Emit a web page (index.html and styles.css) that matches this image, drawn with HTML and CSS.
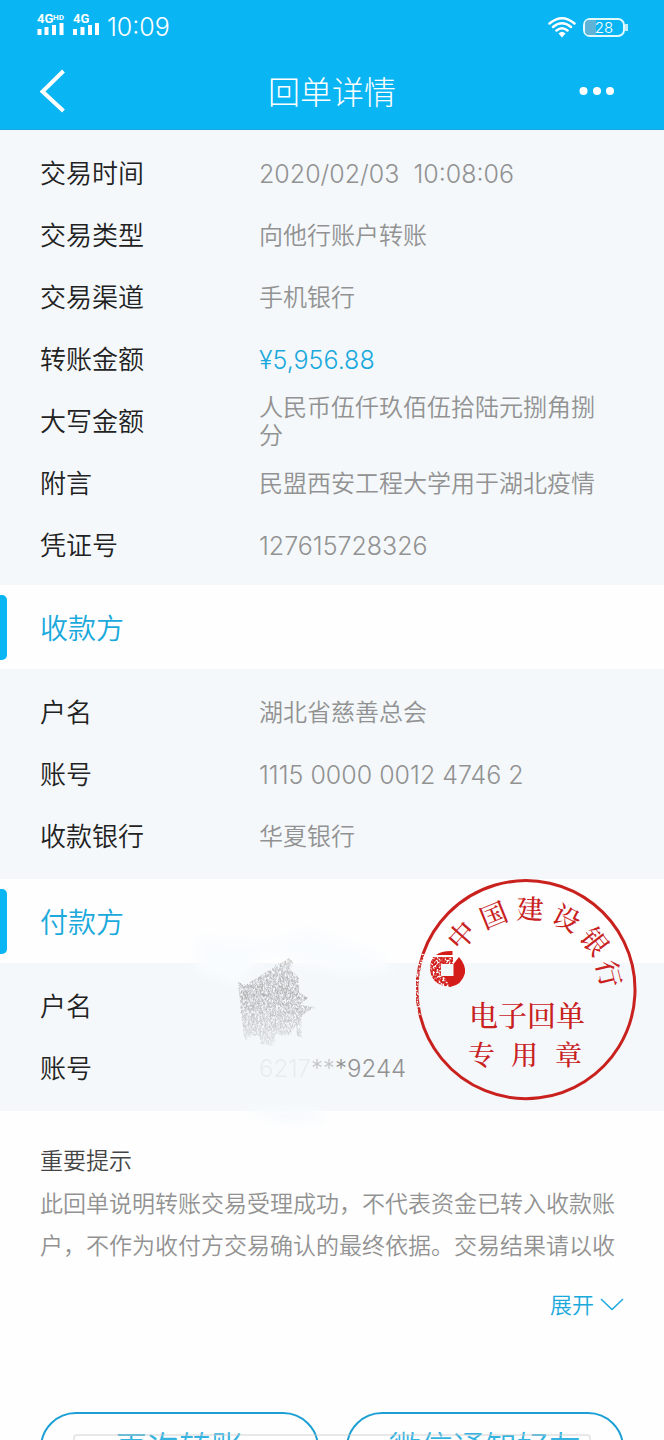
FILE: index.html
```html
<!DOCTYPE html>
<html lang="zh-CN">
<head>
    <meta charset="UTF-8">
    <meta name="viewport" content="width=device-width, initial-scale=1.0">
    <title>回单详情</title>
    <link rel="stylesheet" href="styles.css">
</head>
<body>
    <div class="app">
        <header class="header">
            <div class="status-bar">
                <svg class="signal" viewBox="0 0 64 28">
                    <g class="signal-text">
                        <text x="0" y="10" font-size="13">4G</text>
                        <text x="16" y="7" font-size="8">HD</text>
                        <text x="36" y="10" font-size="13">4G</text>
                    </g>
                    <g class="signal-bars">
                        <path d="M2.5 16v6M9.500 14v8M17 12v10M24.500 10v12"/>
                        <path d="M38 16v6M45.500 14v8M53 12v10M60 10v12"/>
                    </g>
                </svg>
                <span class="clock">10:09</span>
                <svg class="wifi" viewBox="0 0 28 22">
                    <path d="M1.500 7.500Q14-3 26.500 7.500M5 11Q14 3.500 23 11M8.500 14.500Q14 10 19.500 14.500"/>
                    <path class="wifi-dot" d="M10.500 17.500Q14 14 17.500 17.500L14 21.500z"/>
                </svg>
                <div class="battery"><span class="battery-level"></span><span class="battery-text">28</span></div>
            </div>
            <nav class="nav">
                <button class="nav-btn" type="button" aria-label="返回">
                    <svg class="back-icon" viewBox="0 0 26 44"><path d="M23.500 2L2.500 22.500L23.500 42"/></svg>
                </button>
                <h1 class="nav-title">回单详情</h1>
                <button class="nav-btn nav-more" type="button" aria-label="更多">
                    <svg class="more-icon" viewBox="0 0 36 10"><circle cx="4.500" cy="5" r="4"/><circle cx="18" cy="5" r="4"/><circle cx="31" cy="5" r="4"/></svg>
                </button>
            </nav>
        </header>

        <main>
            <dl class="details details-main">
                <div class="row"><dt>交易时间</dt><dd class="number">2020/02/03&nbsp; 10:08:06</dd></div>
                <div class="row"><dt>交易类型</dt><dd>向他行账户转账</dd></div>
                <div class="row"><dt>交易渠道</dt><dd>手机银行</dd></div>
                <div class="row"><dt>转账金额</dt><dd class="number amount">¥5,956.88</dd></div>
                <div class="row"><dt>大写金额</dt><dd>人民币伍仟玖佰伍拾陆元捌角捌分</dd></div>
                <div class="row"><dt>附言</dt><dd>民盟西安工程大学用于湖北疫情</dd></div>
                <div class="row"><dt>凭证号</dt><dd class="number">127615728326</dd></div>
            </dl>

            <h2 class="section-title">收款方</h2>
            <dl class="details">
                <div class="row"><dt>户名</dt><dd>湖北省慈善总会</dd></div>
                <div class="row"><dt>账号</dt><dd class="number">1115 0000 0012 4746 2</dd></div>
                <div class="row"><dt>收款银行</dt><dd>华夏银行</dd></div>
            </dl>

            <section class="payer">
                <h2 class="section-title">付款方</h2>
                <dl class="details">
                    <div class="row"><dt>户名</dt><dd></dd></div>
                    <div class="row"><dt>账号</dt><dd><span class="erased">6217</span><span class="half-erased">**</span>*9244</dd></div>
                </dl>

                <svg class="smudge" viewBox="0 0 250 210">
                    <defs>
                        <filter id="grain" x="-10%" y="-10%" width="120%" height="120%">
                            <feTurbulence type="fractalNoise" baseFrequency="0.6 0.35" numOctaves="3" seed="4" result="noise"/>
                            <feColorMatrix in="noise" type="matrix" values="0 0 0 0 0  0 0 0 0 0  0 0 0 0 0  2.500 0 0 0 -0.700" result="mask"/>
                            <feComposite in="SourceGraphic" in2="mask" operator="in" result="cut"/>
                            <feDisplacementMap in="cut" in2="noise" scale="3"/>
                        </filter>
                        <filter id="soft"><feGaussianBlur stdDeviation="5"/></filter>
                        <linearGradient id="smudgeFade" x1="0" y1="0" x2="0" y2="1">
                            <stop offset="0" stop-color="#aaa" stop-opacity=".6"/>
                            <stop offset=".4" stop-color="#aaa" stop-opacity=".9"/>
                            <stop offset="1" stop-color="#aaa" stop-opacity=".3"/>
                        </linearGradient>
                    </defs>
                    <path class="wash" filter="url(#soft)" d="M16 16L90 22L125 8L195 30L215 50L170 55L120 45L90 32L55 65L15 50z"/>
                    <path class="wash-blue" filter="url(#soft)" d="M62 188L130 186L148 202L98 204z"/>
                    <path fill="url(#smudgeFade)" filter="url(#grain)" d="M58 61L64 66L109 38L113 42L110 50L118 56L119 72L128 78L120 85L135 87L121 96L122 118L117 116L116 105L108 116L95 114L94 126L81 124L79 115L67 117L66 122L63 112z"/>
                </svg>

                <svg class="seal" viewBox="0 0 222 222" role="img" aria-label="中国建设银行电子回单专用章">
                    <defs>
                        <filter id="sealGrain">
                            <feTurbulence type="fractalNoise" baseFrequency="0.5" numOctaves="2" seed="8" result="noise"/>
                            <feColorMatrix in="noise" type="matrix" values="0 0 0 0 0  0 0 0 0 0  0 0 0 0 0  5 0 0 0 -1.700" result="mask"/>
                            <feComposite in="SourceGraphic" in2="mask" operator="in"/>
                        </filter>
                    </defs>
                    <path class="seal-ring" d="M8 76A109 109 0 1 1 5 137"/>
                    <path class="seal-ring" filter="url(#sealGrain)" d="M8 76A109 109 0 0 0 5 137"/>
                    <g class="seal-arc">
                        <text transform="translate(47 58) rotate(-48)" y="9">中</text>
                        <text transform="translate(79 38) rotate(-22)" y="9">国</text>
                        <text transform="translate(115 32) rotate(2)" y="9">建</text>
                        <text transform="translate(151 41) rotate(27)" y="9">设</text>
                        <text transform="translate(179 64) rotate(52)" y="9">银</text>
                        <text transform="translate(193 96) rotate(76)" y="9">行</text>
                    </g>
                    <path class="seal-logo" d="M44 79Q51 87 50 95Q47 107 35 109L29 98H38.500V86z"/>
                    <path class="seal-logo" d="M21 77Q26 73 36 73H37.500V77z"/>
                    <path class="seal-logo" filter="url(#sealGrain)" d="M18 79H38V86H26V98H39L36 109Q17 108 15 92Q15 84 18 79z"/>
                    <text class="seal-line" x="54" y="149">电子回单</text>
                    <g class="seal-line"><text x="53" y="187">专</text><text x="96" y="187">用</text><text x="140" y="187">章</text></g>
                </svg>
            </section>

            <section class="tips">
                <h3 class="tips-title">重要提示</h3>
                <p class="tips-text">此回单说明转账交易受理成功，不代表资金已转入收款账户，不作为收付方交易确认的最终依据。交易结果请以收</p>
                <button class="expand" type="button">展开
                    <svg class="expand-icon" viewBox="0 0 24 14"><path d="M1 1L12 11.500L23 1"/></svg>
                </button>
            </section>

            <div class="actions">
                <button class="action" type="button">再次转账</button>
                <button class="action" type="button">微信通知好友</button>
            </div>
        </main>
        <div class="home-handle"></div>
    </div>
</body>
</html>
```
FILE: styles.css
```css
* {
    box-sizing: border-box;
    margin: 0;
    padding: 0;
}

body {
    font-family: Inter, 'Noto Sans CJK SC', sans-serif;
    font-weight: 350;
    background-color: #fefefe;
    color: #222;
}

button {
    font: inherit;
    background: none;
    border: none;
    cursor: pointer;
}

.app {
    position: relative;
    height: 100vh;
    overflow: hidden;
}

.header {
    padding-bottom: 2px;
    background: #0ab5f3;
    color: white;
    border-bottom: 1px solid #15a9e0;
}

.status-bar {
    display: flex;
    align-items: center;
    height: 54px;
    padding: 0 37px;
}

.signal {
    width: 64px;
    height: 28px;
    overflow: visible;
}

.signal-text {
    fill: white;
    font-family: Roboto, sans-serif;
    font-weight: 700;
}

.signal-bars {
    stroke: white;
    stroke-width: 4;
}

.clock {
    margin-left: 6px;
    font-size: 25px;
}

.wifi {
    width: 28px;
    height: 22px;
    margin-left: auto;
    fill: none;
    stroke: white;
    stroke-width: 2.5;
    stroke-linecap: round;
}

.wifi-dot {
    fill: white;
    stroke: none;
}

.battery {
    position: relative;
    display: flex;
    align-items: center;
    justify-content: center;
    width: 42px;
    height: 19px;
    margin: 0 2px 0 7px;
    border: 2px solid #e0faff;
    border-radius: 7px;
}

.battery::after {
    content: '';
    position: absolute;
    right: -5px;
    top: 4px;
    width: 3px;
    height: 7px;
    background: #c0ecfa;
}

.battery-level {
    position: absolute;
    left: 0;
    top: 0;
    bottom: 0;
    width: 28%;
    border-radius: 4px 0 0 4px;
    background: #5fb3d6;
}

.battery-text {
    position: relative;
    font-size: 15px;
    line-height: 15px;
}

.nav {
    display: flex;
    align-items: center;
    justify-content: space-between;
    height: 73px;
    padding: 0 40px;
}

.nav-btn {
    display: flex;
    align-items: center;
    width: 44px;
    height: 60px;
    color: white;
}

.nav-more {
    justify-content: flex-end;
}

.back-icon {
    width: 26px;
    height: 44px;
    fill: none;
    stroke: white;
    stroke-width: 4;
}

.more-icon {
    width: 36px;
    height: 10px;
    margin-right: 9px;
    fill: white;
    overflow: visible;
}

.nav-title {
    padding-top: 4px;
    font-size: 32px;
    line-height: 36px;
    font-weight: 300;
}

.details {
    padding: 13px 40px 11px;
    background: #f4f8fb;
}

.details-main {
    padding-bottom: 8px;
}

.row {
    display: grid;
    grid-template-columns: 219px 1fr;
    align-items: center;
    min-height: 62px;
    padding-right: 20px;
}

.row dt {
    font-size: 26px;
    line-height: 28px;
}

.row dd {
    font-size: 24px;
    line-height: 28px;
    color: #929292;
}

.row .number {
    font-size: 25px;
}

.row .amount {
    color: #1aa9dc;
}

.section-title {
    display: flex;
    align-items: center;
    height: 84px;
    font-size: 28px;
    font-weight: 350;
    color: #1aa9dc;
}

.section-title::before {
    content: '';
    width: 7px;
    height: 65px;
    margin-right: 33px;
    border-radius: 0 5px 5px 0;
    background: #0ab5f3;
}

.payer {
    position: relative;
}

.erased {
    opacity: 0.12;
}

.half-erased {
    opacity: 0.5;
}

.smudge {
    position: absolute;
    left: 180px;
    top: 41px;
    width: 250px;
    height: 210px;
    pointer-events: none;
}

.wash {
    fill: #f9fcfe;
}

.wash-blue {
    fill: #f8fbfd;
}

.seal {
    position: absolute;
    right: 27px;
    top: -1px;
    width: 222px;
    height: 222px;
    overflow: visible;
    pointer-events: none;
    font-family: 'Noto Serif CJK SC', 'Noto Sans CJK SC', serif;
    font-weight: 500;
    fill: #c9211e;
}

.seal-ring {
    fill: none;
    stroke: #c9211e;
    stroke-width: 3;
}

.seal-arc {
    font-size: 27px;
    text-anchor: middle;
}

.seal-line {
    font-size: 29px;
}

g.seal-line {
    font-size: 27px;
}

.seal-logo {
    fill: #d41d1a;
}

.tips {
    display: flex;
    flex-direction: column;
    padding: 28px 40px 0;
}

.tips-title {
    font-size: 23px;
    line-height: 44px;
    font-weight: 350;
    color: #444;
}

.tips-text {
    font-size: 23px;
    line-height: 42px;
    color: #929292;
}

.expand {
    display: flex;
    align-items: center;
    align-self: flex-end;
    gap: 6px;
    height: 40px;
    margin-top: 18px;
    font-size: 22px;
    line-height: 24px;
    color: #1aa9dc;
}

.expand-icon {
    width: 24px;
    height: 14px;
    fill: none;
    stroke: #1aa9dc;
    stroke-width: 1.5;
}

.actions {
    display: grid;
    grid-template-columns: 1fr 1fr;
    gap: 27px;
    padding: 87px 40px 0;
}

.action {
    height: 72px;
    border: 2px solid #1c9fd2;
    border-radius: 36px;
    font-size: 32px;
    line-height: 32px;
    color: #35b4e2;
}

.home-handle {
    position: absolute;
    left: 73px;
    right: 73px;
    bottom: -4px;
    height: 10px;
    border: 2px solid rgba(200, 200, 200, 0.4);
    border-radius: 4px;
    pointer-events: none;
}
```
